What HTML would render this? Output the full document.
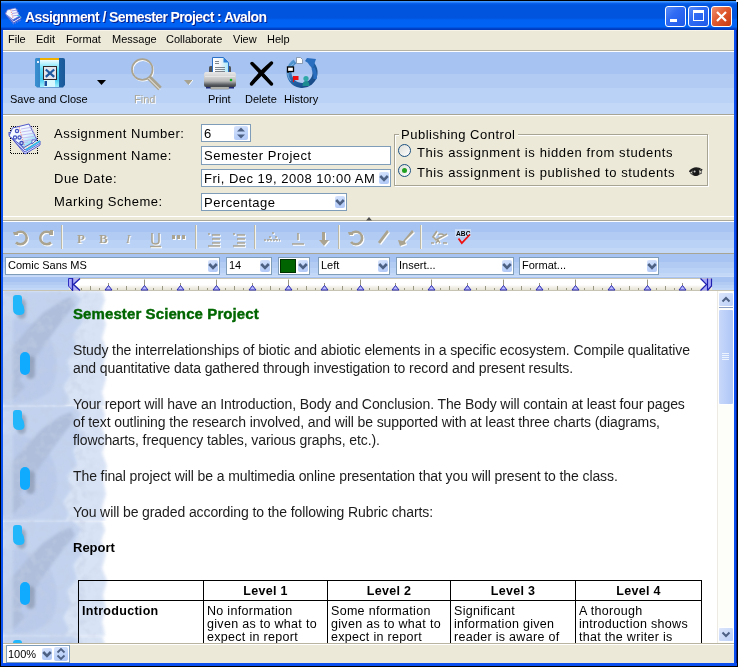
<!DOCTYPE html>
<html><head><meta charset="utf-8">
<style>
*{box-sizing:border-box}
html,body{margin:0;padding:0}
body{width:738px;height:667px;overflow:hidden;position:relative;background:#fff;font-family:"Liberation Sans",sans-serif;color:#000;will-change:transform}
.a{position:absolute}
#title{left:0;top:0;width:738px;height:30px;background:linear-gradient(to bottom,#000 0,#000 1px,#3D95FF 1px,#3D95FF 2px,#0A64EE 3px,#0055DF 5px,#0054DD 18px,#0062F4 20px,#0063F6 27px,#0048D0 28px,#0036B8 30px)}
#ttxt{left:25px;top:9px;font:bold 14px "Liberation Sans",sans-serif;color:#fff;letter-spacing:-0.6px;text-shadow:1px 1px 0 #0A1E8C;white-space:nowrap}
.tb{top:6px;width:21px;height:21px;border:1px solid #fff;border-radius:3px;background:linear-gradient(135deg,#5A8CF8 0%,#2F6BF4 40%,#1F5AE8 100%)}
#lb{left:0;top:30px;width:3px;height:637px;background:linear-gradient(to right,#000 0,#000 1px,#0A52F2 1px)}
#rb{left:734px;top:30px;width:4px;height:637px;background:linear-gradient(to right,#0A4EF0 0,#0A4EF0 2.5px,#001C90 2.5px,#001C90 3.2px,#000 3.2px)}
#bb{left:1px;top:663px;width:736px;height:4px;background:linear-gradient(#0A4EF0 0,#0A4EF0 3px,#000 3px)}
#menu{left:3px;top:30px;width:731px;height:20px;background:#ECE9D8;border-top:1px solid #F8F4E8}
.mi{top:33px;font-size:11px;white-space:nowrap}
#mline{left:3px;top:50px;width:731px;height:2px;background:linear-gradient(#B6B3A4 0,#B6B3A4 1px,#fff 1px)}
#tool{left:3px;top:52px;width:731px;height:62px;background:linear-gradient(#A7C3F1 0,#A7C3F1 22px,#B1CBF3 22px,#B1CBF3 36px,#BAD2F5 36px,#BAD2F5 51px,#C3D8F6 51px)}
.tl{top:93px;font-size:11px;white-space:nowrap}
#tline{left:3px;top:114px;width:731px;height:2px;background:linear-gradient(#A8A594 0,#A8A594 1px,#fff 1px)}
#form{left:3px;top:116px;width:731px;height:100px;background:#ECE9D8}
.lab{font-size:13px;letter-spacing:0.5px;white-space:nowrap}
.inp{background:#fff;border:1px solid #7F9DB9}
.dd{position:absolute;width:14px;border-radius:2px;background:linear-gradient(160deg,#D8E4FC 0%,#C2D6FA 45%,#AEC6F6 100%)}
#split{left:3px;top:216px;width:731px;height:6px;background:linear-gradient(#fff 0,#fff 1px,#ECE9D8 1px,#ECE9D8 4px,#ACA899 4px,#ACA899 5px,#fff 5px)}
#ft1{left:3px;top:222px;width:731px;height:31px;background:linear-gradient(#A7C3F1 0,#A7C3F1 10px,#B1CBF3 10px,#B1CBF3 18px,#BAD2F5 18px,#BAD2F5 26px,#C3D8F6 26px)}
#ft1line{left:3px;top:253px;width:731px;height:1px;background:#A8A594}
#ft2{left:3px;top:254px;width:731px;height:37px;background:linear-gradient(#A7C3F1 0,#A7C3F1 8px,#B1CBF3 8px,#B1CBF3 14px,#BAD2F5 14px,#BAD2F5 19px,#C3D8F6 19px,#C3D8F6 22px,#CADCF8 22px,#CADCF8 23px,#A7C3F1 23px,#A7C3F1 28px,#B1CBF3 28px,#B1CBF3 31px,#BAD2F5 31px,#BAD2F5 34px,#C3D8F6 34px)}
.sep{width:2px;background:linear-gradient(to right,#BCB8A8 0,#BCB8A8 1px,#F4F3EC 1px)}
.cb{position:absolute;top:257px;height:18px;background:#fff;border:1px solid #7F9DB9;font-size:11px;white-space:nowrap}
#ruler{left:69px;top:278px;width:643px;height:12px;background:linear-gradient(#C8C4B4 0,#C8C4B4 1px,#fff 1px,#fff 7px,#F2F0E8 9px,#E6E3D6 12px)}
#content{left:3px;top:291px;width:713px;height:352px;background:#fff;overflow:hidden}
#sb{left:716px;top:291px;width:18px;height:352px;background:linear-gradient(to right,#fff 0,#fff 1px,#ECEAE2 1px,#ECEAE2 2.5px,#FDFDFA 2.5px)}
#status{left:3px;top:643px;width:731px;height:20px;background:linear-gradient(#B8B4A0 0,#B8B4A0 1px,#fff 1px,#fff 2px,#ECE9D8 2px)}
.body{font-size:14px;letter-spacing:-0.1px;white-space:nowrap;line-height:18px;color:#1c1c1c}
table{border-collapse:collapse;font-size:12.5px;letter-spacing:0.3px}
td{border:1px solid #000;vertical-align:top;padding:0 3px;line-height:13px}
</style></head><body>
<!-- title bar -->
<div id="title" class="a"></div>
<svg class="a" style="left:4px;top:6px" width="20" height="20" viewBox="0 0 40 40">
 <path d="M3 15 L19 34 L34 25 L34 21 L19 30 L3 12 Z" fill="#E8ECFF" stroke="#5058C8" stroke-width="2"/>
 <path d="M5 19 L19 36 L34 28" fill="none" stroke="#8088E0" stroke-width="2" stroke-dasharray="3 2"/>
 <path d="M6.5 8 L23 4 L31 20 L18 27.5 L3 16 Z" fill="#F4F8FF" stroke="#7078D8" stroke-width="1.5"/>
 <path d="M15 10 L27 8 M16 15 L29 13 M17 20 L30 18" stroke="#A8A0E8" stroke-width="2"/>
 <path d="M13 7 L18.5 26" stroke="#F07070" stroke-width="2" stroke-dasharray="2 3"/>
 <path d="M26 19 L31 19 L34 24" stroke="#40C8E8" stroke-width="2" fill="none"/>
</svg>
<div class="a" style="left:0;top:0;width:1px;height:30px;background:#000"></div><div class="a" style="left:737px;top:2px;width:1px;height:28px;background:#000"></div><div class="a" style="left:736px;top:0;width:2px;height:2px;background:#E8ECF8"></div><div class="a" style="left:0;top:0;width:1px;height:1px;background:#000"></div><div id="ttxt" class="a">Assignment / Semester Project : Avalon</div>
<div class="a tb" style="left:665px"><div class="a" style="left:4px;top:12px;width:7px;height:3px;background:#fff"></div></div>
<div class="a tb" style="left:688px"><div class="a" style="left:4px;top:3px;width:11px;height:11px;border:1px solid #fff;border-top-width:3px"></div></div>
<div class="a tb" style="left:711px;background:linear-gradient(135deg,#F09070 0%,#E05A30 45%,#C83A10 100%)">
 <svg class="a" style="left:3px;top:3px" width="13" height="13" viewBox="0 0 13 13"><path d="M2 2 L11 11 M11 2 L2 11" stroke="#fff" stroke-width="2.2"/></svg>
</div>
<div id="lb" class="a"></div><div id="rb" class="a"></div><div id="bb" class="a"></div>

<!-- menu -->
<div id="menu" class="a"></div>
<div class="a mi" style="left:8px">File</div>
<div class="a mi" style="left:36px">Edit</div>
<div class="a mi" style="left:66px">Format</div>
<div class="a mi" style="left:112px">Message</div>
<div class="a mi" style="left:166px">Collaborate</div>
<div class="a mi" style="left:233px">View</div>
<div class="a mi" style="left:267px">Help</div>
<div id="mline" class="a"></div>

<!-- toolbar -->
<div id="tool" class="a"></div>
<!-- save icon -->
<svg class="a" style="left:34px;top:57px" width="32" height="32" viewBox="0 0 32 32">
 <defs>
  <linearGradient id="fb" x1="0" y1="0" x2="1" y2="0"><stop offset="0" stop-color="#3A90D0"/><stop offset="0.5" stop-color="#2070B8"/><stop offset="1" stop-color="#1A5898"/></linearGradient>
  <linearGradient id="fl" x1="0" y1="0" x2="0" y2="1"><stop offset="0" stop-color="#F0FCFF"/><stop offset="0.35" stop-color="#60E0F8"/><stop offset="0.7" stop-color="#40C8F0"/><stop offset="1" stop-color="#A0F0FF"/></linearGradient>
 </defs>
 <path d="M2 1 L29 1 Q31 1 31 3 L31 28 L29 30.5 L3 30.5 L1 28.5 L1 2 Z" fill="url(#fb)"/>
 <rect x="6" y="1" width="19" height="2" fill="#F0B000"/>
 <rect x="6" y="3" width="19" height="27" fill="url(#fl)"/>
 <rect x="3" y="4" width="2" height="2" fill="#E8F0FF"/>
 <rect x="9.5" y="9.5" width="13" height="13" fill="#E4E6EE" stroke="#302828" stroke-width="1"/>
 <path d="M11.8 12.5 L20.2 19.8 M20.2 12.5 L11.8 19.8" stroke="#1E5AA0" stroke-width="2.3"/>
 <rect x="10" y="23" width="11" height="7" fill="#D8F8FF"/>
 <rect x="10.5" y="24" width="2.5" height="5" fill="#1A50A0"/>
</svg>
<svg class="a" style="left:97px;top:80px" width="9" height="5"><path d="M0 0 L9 0 L4.5 5 Z" fill="#000"/></svg>
<div class="a tl" style="left:10px">Save and Close</div>
<!-- find -->
<svg class="a" style="left:131px;top:58px" width="33" height="33" viewBox="0 0 33 33">
 <circle cx="12" cy="12.5" r="10.3" fill="none" stroke="#fff" stroke-width="1.6"/>
 <circle cx="11.3" cy="11.5" r="10.3" fill="none" stroke="#A9A390" stroke-width="1.7"/>
 <path d="M17.5 19 L29 30.5" stroke="#A9A390" stroke-width="5"/>
 <path d="M17.5 20 L29 31.5" stroke="#fff" stroke-width="0.9"/>
 <path d="M19 19.5 L30 30.5" stroke="#A9A390" stroke-width="0"/>
</svg>
<svg class="a" style="left:184px;top:80px" width="9" height="5"><path d="M0 0 L9 0 L4.5 5 Z" fill="#A8A290"/><path d="M5 5 L9 0" stroke="#fff" stroke-width="1"/></svg>
<div class="a tl" style="left:134px;color:#ACA899;text-shadow:1px 1px 0 #fff">Find</div>
<!-- print -->
<svg class="a" style="left:200px;top:54px" width="40" height="38" viewBox="0 0 40 38">
 <defs>
  <linearGradient id="pb" x1="0" y1="0" x2="0" y2="1"><stop offset="0" stop-color="#E8E8E8"/><stop offset="0.35" stop-color="#D0D0D0"/><stop offset="0.6" stop-color="#B8B8B8"/><stop offset="0.85" stop-color="#585C60"/><stop offset="1" stop-color="#3A3E42"/></linearGradient>
  <linearGradient id="pp" x1="0" y1="0" x2="1" y2="0"><stop offset="0" stop-color="#FFFFFF"/><stop offset="0.5" stop-color="#F0F4F8"/><stop offset="1" stop-color="#A8E8F8"/></linearGradient>
 </defs>
 <rect x="9" y="12" width="22" height="9" rx="1.5" fill="#505458"/>
 <path d="M12.5 3.5 L23.5 3.5 L28.5 8.5 L28.5 20.5 L12.5 20.5 Z" fill="url(#pp)" stroke="#2A70C8" stroke-width="1"/>
 <path d="M23.5 3.5 L28.5 8.5 L23.5 8.5 Z" fill="#2A80D8"/>
 <path d="M15 7.5 H19 M15 9.5 H19 M15 13.5 H25 M15 15.5 H25 M15 17.5 H25 M15 19.5 H20" stroke="#707880" stroke-width="0.9"/>
 <path d="M6 18 L34 18 Q36 18 36 21 L36 31 Q36 33 34 33 L6 33 Q4 33 4 31 L4 21 Q4 18 6 18 Z" fill="url(#pb)"/>
 <path d="M5 22.5 H35" stroke="#F0F0F0" stroke-width="0.8" opacity="0.8"/>
 <circle cx="31" cy="26" r="1.3" fill="#10B020"/>
 <rect x="6" y="33" width="5" height="1.5" fill="#202878"/>
 <rect x="29" y="33" width="5" height="1.5" fill="#202878"/>
 <rect x="10.5" y="33" width="18.5" height="2" rx="0.8" fill="#C8C8C0" stroke="#606060" stroke-width="0.5"/>
</svg>
<div class="a tl" style="left:208px">Print</div>
<!-- delete -->
<svg class="a" style="left:248px;top:60px" width="27" height="27" viewBox="0 0 27 27">
 <path d="M2.5 3.5 Q3 1.5 5 2.5 Q13 9 24 23 Q25 25.5 22.5 25 Q13 16 2.5 3.5 Z" fill="#000"/>
 <path d="M24.5 3 Q25 1 22.5 2 Q13 9 2.5 22.5 Q1.5 25 4 25 Q14 15 24.5 3 Z" fill="#000"/>
 <path d="M4 3.5 L23.5 24 M23.5 3 L3.5 24" stroke="#000" stroke-width="3.3" stroke-linecap="round"/>
</svg>
<div class="a tl" style="left:245px">Delete</div>
<!-- history -->
<svg class="a" style="left:285px;top:57px" width="34" height="33" viewBox="0 0 34 33">
 <defs><linearGradient id="hg" x1="0" y1="0" x2="1" y2="1"><stop offset="0" stop-color="#5A9ED8"/><stop offset="0.45" stop-color="#2466AA"/><stop offset="1" stop-color="#154580"/></linearGradient></defs>
 <path d="M10 4.5 A13 13 0 1 0 27 7" fill="none" stroke="url(#hg)" stroke-width="5"/>
 <path d="M9 6.5 A11 11 0 0 0 6 24" fill="none" stroke="#B8DCF8" stroke-width="1" opacity="0.5"/>
 <path d="M25 9 Q23 5 20 4 L22 1 L31 2 L28 11 L26 9.5 Z" fill="#2A6EC0"/>
 <path d="M28 11 Q31 17 30 22" fill="none" stroke="#2A6EC0" stroke-width="3.5"/>
 <path d="M11.5 0.5 L15.5 0.5 L17.5 2.5 L17.5 6.5 L11.5 6.5 Z" fill="#fff" stroke="#7A8AA0" stroke-width="0.8"/>
 <rect x="2.5" y="10" width="6" height="4.5" fill="#fff" stroke="#000" stroke-width="1.3"/>
 <path d="M3 14 V16" stroke="#000" stroke-width="1.3"/>
 <rect x="8" y="19" width="5.5" height="4" fill="#F01010"/>
 <path d="M8.5 19 V25" stroke="#E01010" stroke-width="1.2"/>
 <circle cx="21" cy="21.5" r="2.6" fill="#30A8A8"/>
 <path d="M17.5 29 Q17.5 24 21 24 Q24.5 24 24.5 29 Z" fill="#1C8C90"/>
</svg>
<div class="a tl" style="left:284px">History</div>
<div id="tline" class="a"></div>

<!-- form -->
<div id="form" class="a"></div>
<svg class="a" style="left:6px;top:120px" width="40" height="40" viewBox="0 0 40 40">
 <defs><linearGradient id="pg" x1="0" y1="0" x2="1" y2="1"><stop offset="0" stop-color="#FFFFFF"/><stop offset="0.55" stop-color="#E8F4FF"/><stop offset="1" stop-color="#50D0F0"/></linearGradient></defs>
 <rect x="4.5" y="6.5" width="27" height="27" fill="none" stroke="#000" stroke-width="1" stroke-dasharray="1 1" shape-rendering="crispEdges"/>
 <path d="M3 15 L19 34 L34 25 L34 21 L19 30 L3 12 Z" fill="#E8ECFF" stroke="#5058C8" stroke-width="1"/>
 <path d="M4 16.5 L19 32 L33.5 23.5" fill="none" stroke="#5058C8" stroke-width="0.9"/>
 <path d="M20 30 L34 21" stroke="#30B8E8" stroke-width="1.5"/>
 <path d="M6.5 8 L23 4 L31 20 L18 27.5 L3 16 Z" fill="url(#pg)" stroke="#5058C8" stroke-width="1"/>
 <path d="M15 9 L27 7 M15.5 12 L28 10 M16 15 L29 13 M17 18 L30 16 M17.5 21 L30 19 M13 23 L22 22" stroke="#C0B8F0" stroke-width="0.9"/>
 <path d="M13 7 L18.5 26" stroke="#F08080" stroke-width="0.9" stroke-dasharray="1.5 1"/>
 <g fill="none" stroke="#4050C0" stroke-width="1.2"><circle cx="11" cy="11" r="1.6"/><circle cx="9" cy="17.5" r="1.6"/><circle cx="13.5" cy="17.5" r="1.6"/><circle cx="15.5" cy="23" r="1.6"/></g>
 <path d="M26 20 L30 20 L26 24 Z" fill="#fff" stroke="#4050C0" stroke-width="0.8"/>
</svg>
<div class="a lab" style="left:54px;top:126px">Assignment Number:</div>
<div class="a lab" style="left:54px;top:148px">Assignment Name:</div>
<div class="a lab" style="left:54px;top:171px">Due Date:</div>
<div class="a lab" style="left:54px;top:194px">Marking Scheme:</div>
<!-- number spinner -->
<div class="a inp" style="left:201px;top:124px;width:50px;height:18px"></div>
<div class="a lab" style="left:204px;top:126px">6</div>
<div class="dd" style="left:234px;top:126px;height:14px;width:14px"></div><svg class="a" style="left:234px;top:126px" width="14" height="14" viewBox="0 0 14 14"><path d="M3 5.5 L7 1.5 L11 5.5 Z M3 8.5 L7 12.5 L11 8.5 Z" fill="#4D6185"/></svg>
<!-- name -->
<div class="a inp" style="left:201px;top:146px;width:190px;height:19px"></div>
<div class="a lab" style="left:204px;top:148px">Semester Project</div>
<!-- date -->
<div class="a inp" style="left:201px;top:169px;width:190px;height:18px"></div>
<div class="a lab" style="left:204px;top:171px;width:170px;overflow:hidden">Fri, Dec 19, 2008 10:00 AM</div>
<div class="dd" style="left:379px;top:172px;height:12px;width:10px"></div><svg class="a" style="left:379px;top:172px" width="10" height="12" viewBox="0 0 10 12"><path d="M1.2 4 L5 7.8 L8.8 4" stroke="#4D6185" stroke-width="2.6" fill="none" stroke-linejoin="miter"/></svg>
<!-- percentage -->
<div class="a inp" style="left:201px;top:193px;width:146px;height:18px"></div>
<div class="a lab" style="left:204px;top:195px">Percentage</div>
<div class="dd" style="left:335px;top:196px;height:12px;width:10px"></div><svg class="a" style="left:335px;top:196px" width="10" height="12" viewBox="0 0 10 12"><path d="M1.2 4 L5 7.8 L8.8 4" stroke="#4D6185" stroke-width="2.6" fill="none" stroke-linejoin="miter"/></svg>
<!-- publishing control -->
<div class="a" style="left:394px;top:134px;width:314px;height:52px;border:1px solid #A8A494;box-shadow:inset 1px 1px 0 #fff,1px 1px 0 #fff"></div>
<div class="a lab" style="left:399px;top:127px;background:#ECE9D8;padding:0 2px">Publishing Control</div>
<div class="a" style="left:398px;top:144px;width:13px;height:13px;border-radius:50%;border:1px solid #1C5180;background:linear-gradient(135deg,#DCDCD7,#fff)"></div>
<div class="a" style="left:398px;top:164px;width:13px;height:13px;border-radius:50%;border:1px solid #1C5180;background:linear-gradient(135deg,#DCDCD7,#fff)"></div>
<div class="a" style="left:402px;top:168px;width:5px;height:5px;border-radius:50%;background:#21A121"></div>
<div class="a lab" style="left:417px;top:145px;letter-spacing:0.6px">This assignment is hidden from students</div>
<div class="a lab" style="left:417px;top:165px;letter-spacing:0.6px">This assignment is published to students</div>
<svg class="a" style="left:689px;top:166px" width="14" height="12" viewBox="0 0 14 12">
 <path d="M0.5 6 Q6 -0.5 13 4.5" fill="none" stroke="#202020" stroke-width="2.2"/>
 <path d="M1.5 7 Q6 11.5 12.5 7" fill="none" stroke="#505050" stroke-width="1.2"/>
 <circle cx="6.8" cy="6.3" r="3.6" fill="#181818"/>
 <circle cx="5.6" cy="5.4" r="1" fill="#C8C8C8"/>
 <path d="M11 3 Q13.5 5 12 8" fill="none" stroke="#606060" stroke-width="1"/>
</svg>

<div id="split" class="a"></div>
<svg class="a" style="left:366px;top:217px" width="6" height="4"><path d="M0 3.5 L3 0 L6 3.5 Z" fill="#505050"/></svg>

<!-- format toolbar 1 -->
<div id="ft1" class="a"></div>
<div id="ft1line" class="a"></div>
<g></g>
<svg class="a" style="left:3px;top:222px" width="731" height="31" viewBox="3 222 731 31">
 <defs><filter id="emb" x="-10%" y="-10%" width="120%" height="130%"><feOffset dx="1" dy="1" in="SourceAlpha" result="o"/><feFlood flood-color="#fff"/><feComposite in2="o" operator="in" result="w"/><feMerge><feMergeNode in="w"/><feMergeNode in="SourceGraphic"/></feMerge></filter></defs>
 <g filter="url(#emb)">
 <g fill="none" stroke="#A9A390" stroke-width="2.6">
  <path d="M16 233.5 A6.3 6.3 0 1 1 16 242.5"/>
  <path d="M51 233.5 A6.3 6.3 0 1 0 51 242.5"/>
 </g>
 <path d="M13 232 L18 232 L18 235 L14 235 Z M50 230 L53 230 L53 235 L49 235 Z" fill="#A9A390"/>
 <g fill="#A9A390" font-family="Liberation Serif" font-weight="bold">
  <text x="77" y="243" font-size="13">P</text>
  <text x="99" y="243" font-size="13">B</text>
  <text x="126" y="243" font-size="13" font-style="italic" font-weight="normal">I</text>
 </g>
 <path d="M152 233 L152 241 Q152 244 155.5 244 Q159 244 159 241 L159 233 M150 246.5 L161 246.5" stroke="#A9A390" stroke-width="1.6" fill="none"/>
 <path d="M172 235 h3 v4 h-3z M177 235 h3 v4 h-3z M182 235 h3 v4 h-3z" fill="#A9A390"/>
 <path d="M208 234 h2 M212 235 h8 M212 239 h8 M212 243 h8 M208 246 h12 M233 234 h2 M237 235 h8 M237 239 h8 M237 243 h8 M233 246 h12" stroke="#A9A390" stroke-width="1.6"/>
 <path d="M264 240 h16 M270 236 v4 M276 236 v4 M273 232 v3" stroke="#A9A390" stroke-width="1.5" stroke-dasharray="2 1"/>
 <path d="M292 244 h12 M298 233 v7" stroke="#A9A390" stroke-width="1.6"/>
 <path d="M322 232 L325 232 L325 240 L329 240 L324 246 L319 240 L322 240 Z" fill="#A9A390"/>
 <path d="M351 234 A6.3 6.3 0 1 1 351 242" stroke="#A9A390" stroke-width="2.6" fill="none"/>
 <path d="M348 232 L353 232 L353 235 L349 235 Z" fill="#A9A390"/>
 <path d="M387 230 L378 242 L380 244 L389 232 Z" fill="#A9A390"/>
 <path d="M412 230 L403 241 L398 240 L400 246 L406 244 L405 241 L414 232 Z" fill="#A9A390"/>
 <path d="M437 231 L433 237 L436 240 L447 234" stroke="#A9A390" stroke-width="1.8" fill="none"/><path d="M438 235 Q441 233 444 235" stroke="#A9A390" stroke-width="1.5" fill="none"/><path d="M431 243 h3 M436 243 l2 -3 l2 3 M443 243 h4" stroke="#A9A390" stroke-width="1.4" fill="none"/>
 </g>
 <rect x="455" y="229" width="16" height="8" fill="#fff" opacity="0.35"/>
 <text x="456" y="236" font-size="6.6" font-weight="bold" font-family="Liberation Sans" fill="#000" letter-spacing="0.1">ABC</text>
 <path d="M458.5 238.5 L461.8 243 L470 234.5" stroke="#F01010" stroke-width="1.8" fill="none"/>
</svg>
<div class="a sep" style="left:61px;top:225px;height:24px"></div>
<div class="a sep" style="left:195px;top:225px;height:24px"></div>
<div class="a sep" style="left:254px;top:225px;height:24px"></div>
<div class="a sep" style="left:338px;top:225px;height:24px"></div>
<div class="a sep" style="left:420px;top:225px;height:24px"></div>

<!-- format toolbar 2 -->
<div id="ft2" class="a"></div>
<div class="cb" style="left:5px;width:215px"><span class="a" style="left:2px;top:1px">Comic Sans MS</span></div>
<div class="cb" style="left:226px;width:46px"><span class="a" style="left:2px;top:1px">14</span></div>
<div class="cb" style="left:278px;width:32px"><div class="a" style="left:1px;top:1px;width:16px;height:14px;background:#006400;border:1px solid #003000"></div></div>
<div class="cb" style="left:318px;width:72px"><span class="a" style="left:2px;top:1px">Left</span></div>
<div class="cb" style="left:396px;width:118px"><span class="a" style="left:2px;top:1px">Insert...</span></div>
<div class="cb" style="left:519px;width:140px"><span class="a" style="left:2px;top:1px">Format...</span></div>
<div id="dds"><div class="dd" style="left:208px;top:260px;height:12px;width:10px"></div><svg class="a" style="left:208px;top:260px" width="10" height="12" viewBox="0 0 10 12"><path d="M1.2 4 L5 7.8 L8.8 4" stroke="#4D6185" stroke-width="2.6" fill="none" stroke-linejoin="miter"/></svg><div class="dd" style="left:260px;top:260px;height:12px;width:10px"></div><svg class="a" style="left:260px;top:260px" width="10" height="12" viewBox="0 0 10 12"><path d="M1.2 4 L5 7.8 L8.8 4" stroke="#4D6185" stroke-width="2.6" fill="none" stroke-linejoin="miter"/></svg><div class="dd" style="left:298px;top:260px;height:12px;width:10px"></div><svg class="a" style="left:298px;top:260px" width="10" height="12" viewBox="0 0 10 12"><path d="M1.2 4 L5 7.8 L8.8 4" stroke="#4D6185" stroke-width="2.6" fill="none" stroke-linejoin="miter"/></svg><div class="dd" style="left:378px;top:260px;height:12px;width:10px"></div><svg class="a" style="left:378px;top:260px" width="10" height="12" viewBox="0 0 10 12"><path d="M1.2 4 L5 7.8 L8.8 4" stroke="#4D6185" stroke-width="2.6" fill="none" stroke-linejoin="miter"/></svg><div class="dd" style="left:502px;top:260px;height:12px;width:10px"></div><svg class="a" style="left:502px;top:260px" width="10" height="12" viewBox="0 0 10 12"><path d="M1.2 4 L5 7.8 L8.8 4" stroke="#4D6185" stroke-width="2.6" fill="none" stroke-linejoin="miter"/></svg><div class="dd" style="left:647px;top:260px;height:12px;width:10px"></div><svg class="a" style="left:647px;top:260px" width="10" height="12" viewBox="0 0 10 12"><path d="M1.2 4 L5 7.8 L8.8 4" stroke="#4D6185" stroke-width="2.6" fill="none" stroke-linejoin="miter"/></svg></div>
<div id="ruler" class="a"></div><div class="a" style="left:3px;top:290px;width:731px;height:1px;background:#C8C4B4"></div>
<svg id="rsvg" class="a" style="left:60px;top:276px" width="660" height="16" viewBox="60 276 660 16"><path d="M68.5 278.5 L72.5 278.5 L72.5 290.5 L68.5 286 Z" fill="#A8A8F8" stroke="#3030C0" stroke-width="1"/><path d="M73 278.5 L80 278.5 L74 284.5 L80 290.5 L73 290.5 Z" fill="#B0B0F8"/><path d="M72.5 278 L72.5 291 M80 278.5 L73.5 284.5 L80 290.5" stroke="#2020B0" stroke-width="1.4" fill="none"/><path d="M81.5 288 V290" stroke="#9A9684" stroke-width="1"/><path d="M90.5 286 V290" stroke="#9A9684" stroke-width="1"/><path d="M99.5 288 V290" stroke="#9A9684" stroke-width="1"/><path d="M108.5 283 V286" stroke="#9A9684" stroke-width="1"/><path d="M105.0 290 L108.5 285.5 L112.0 290 Z" fill="#B8B8FF" stroke="#2A2AB0" stroke-width="1"/><path d="M117.5 288 V290" stroke="#9A9684" stroke-width="1"/><path d="M126.5 286 V290" stroke="#9A9684" stroke-width="1"/><path d="M135.5 288 V290" stroke="#9A9684" stroke-width="1"/><path d="M144.5 279.5 V286" stroke="#9A9684" stroke-width="1"/><path d="M141.0 290 L144.5 285.5 L148.0 290 Z" fill="#B8B8FF" stroke="#2A2AB0" stroke-width="1"/><path d="M153.5 288 V290" stroke="#9A9684" stroke-width="1"/><path d="M162.5 286 V290" stroke="#9A9684" stroke-width="1"/><path d="M171.5 288 V290" stroke="#9A9684" stroke-width="1"/><path d="M180.5 283 V286" stroke="#9A9684" stroke-width="1"/><path d="M177.0 290 L180.5 285.5 L184.0 290 Z" fill="#B8B8FF" stroke="#2A2AB0" stroke-width="1"/><path d="M189.5 288 V290" stroke="#9A9684" stroke-width="1"/><path d="M198.5 286 V290" stroke="#9A9684" stroke-width="1"/><path d="M207.5 288 V290" stroke="#9A9684" stroke-width="1"/><path d="M216.5 279.5 V286" stroke="#9A9684" stroke-width="1"/><path d="M213.0 290 L216.5 285.5 L220.0 290 Z" fill="#B8B8FF" stroke="#2A2AB0" stroke-width="1"/><path d="M225.5 288 V290" stroke="#9A9684" stroke-width="1"/><path d="M234.5 286 V290" stroke="#9A9684" stroke-width="1"/><path d="M243.5 288 V290" stroke="#9A9684" stroke-width="1"/><path d="M252.5 283 V286" stroke="#9A9684" stroke-width="1"/><path d="M249.0 290 L252.5 285.5 L256.0 290 Z" fill="#B8B8FF" stroke="#2A2AB0" stroke-width="1"/><path d="M261.5 288 V290" stroke="#9A9684" stroke-width="1"/><path d="M270.5 286 V290" stroke="#9A9684" stroke-width="1"/><path d="M279.5 288 V290" stroke="#9A9684" stroke-width="1"/><path d="M288.5 279.5 V286" stroke="#9A9684" stroke-width="1"/><path d="M285.0 290 L288.5 285.5 L292.0 290 Z" fill="#B8B8FF" stroke="#2A2AB0" stroke-width="1"/><path d="M297.5 288 V290" stroke="#9A9684" stroke-width="1"/><path d="M306.5 286 V290" stroke="#9A9684" stroke-width="1"/><path d="M315.5 288 V290" stroke="#9A9684" stroke-width="1"/><path d="M324.5 283 V286" stroke="#9A9684" stroke-width="1"/><path d="M321.0 290 L324.5 285.5 L328.0 290 Z" fill="#B8B8FF" stroke="#2A2AB0" stroke-width="1"/><path d="M333.5 288 V290" stroke="#9A9684" stroke-width="1"/><path d="M342.5 286 V290" stroke="#9A9684" stroke-width="1"/><path d="M351.5 288 V290" stroke="#9A9684" stroke-width="1"/><path d="M360.5 279.5 V286" stroke="#9A9684" stroke-width="1"/><path d="M357.0 290 L360.5 285.5 L364.0 290 Z" fill="#B8B8FF" stroke="#2A2AB0" stroke-width="1"/><path d="M369.5 288 V290" stroke="#9A9684" stroke-width="1"/><path d="M378.5 286 V290" stroke="#9A9684" stroke-width="1"/><path d="M386.5 288 V290" stroke="#9A9684" stroke-width="1"/><path d="M395.5 283 V286" stroke="#9A9684" stroke-width="1"/><path d="M392.0 290 L395.5 285.5 L399.0 290 Z" fill="#B8B8FF" stroke="#2A2AB0" stroke-width="1"/><path d="M404.5 288 V290" stroke="#9A9684" stroke-width="1"/><path d="M413.5 286 V290" stroke="#9A9684" stroke-width="1"/><path d="M422.5 288 V290" stroke="#9A9684" stroke-width="1"/><path d="M431.5 279.5 V286" stroke="#9A9684" stroke-width="1"/><path d="M428.0 290 L431.5 285.5 L435.0 290 Z" fill="#B8B8FF" stroke="#2A2AB0" stroke-width="1"/><path d="M440.5 288 V290" stroke="#9A9684" stroke-width="1"/><path d="M449.5 286 V290" stroke="#9A9684" stroke-width="1"/><path d="M458.5 288 V290" stroke="#9A9684" stroke-width="1"/><path d="M467.5 283 V286" stroke="#9A9684" stroke-width="1"/><path d="M464.0 290 L467.5 285.5 L471.0 290 Z" fill="#B8B8FF" stroke="#2A2AB0" stroke-width="1"/><path d="M476.5 288 V290" stroke="#9A9684" stroke-width="1"/><path d="M485.5 286 V290" stroke="#9A9684" stroke-width="1"/><path d="M494.5 288 V290" stroke="#9A9684" stroke-width="1"/><path d="M503.5 279.5 V286" stroke="#9A9684" stroke-width="1"/><path d="M500.0 290 L503.5 285.5 L507.0 290 Z" fill="#B8B8FF" stroke="#2A2AB0" stroke-width="1"/><path d="M512.5 288 V290" stroke="#9A9684" stroke-width="1"/><path d="M521.5 286 V290" stroke="#9A9684" stroke-width="1"/><path d="M530.5 288 V290" stroke="#9A9684" stroke-width="1"/><path d="M539.5 283 V286" stroke="#9A9684" stroke-width="1"/><path d="M536.0 290 L539.5 285.5 L543.0 290 Z" fill="#B8B8FF" stroke="#2A2AB0" stroke-width="1"/><path d="M548.5 288 V290" stroke="#9A9684" stroke-width="1"/><path d="M557.5 286 V290" stroke="#9A9684" stroke-width="1"/><path d="M566.5 288 V290" stroke="#9A9684" stroke-width="1"/><path d="M575.5 279.5 V286" stroke="#9A9684" stroke-width="1"/><path d="M572.0 290 L575.5 285.5 L579.0 290 Z" fill="#B8B8FF" stroke="#2A2AB0" stroke-width="1"/><path d="M584.5 288 V290" stroke="#9A9684" stroke-width="1"/><path d="M593.5 286 V290" stroke="#9A9684" stroke-width="1"/><path d="M602.5 288 V290" stroke="#9A9684" stroke-width="1"/><path d="M611.5 283 V286" stroke="#9A9684" stroke-width="1"/><path d="M608.0 290 L611.5 285.5 L615.0 290 Z" fill="#B8B8FF" stroke="#2A2AB0" stroke-width="1"/><path d="M620.5 288 V290" stroke="#9A9684" stroke-width="1"/><path d="M629.5 286 V290" stroke="#9A9684" stroke-width="1"/><path d="M638.5 288 V290" stroke="#9A9684" stroke-width="1"/><path d="M647.5 279.5 V286" stroke="#9A9684" stroke-width="1"/><path d="M644.0 290 L647.5 285.5 L651.0 290 Z" fill="#B8B8FF" stroke="#2A2AB0" stroke-width="1"/><path d="M656.5 288 V290" stroke="#9A9684" stroke-width="1"/><path d="M665.5 286 V290" stroke="#9A9684" stroke-width="1"/><path d="M674.5 288 V290" stroke="#9A9684" stroke-width="1"/><path d="M682.5 283 V286" stroke="#9A9684" stroke-width="1"/><path d="M679.0 290 L682.5 285.5 L686.0 290 Z" fill="#B8B8FF" stroke="#2A2AB0" stroke-width="1"/><path d="M691.5 288 V290" stroke="#9A9684" stroke-width="1"/><path d="M700.5 278.5 L711.5 278.5 L711.5 286 L707.5 290.5 L700.5 290.5 L706 284.5 Z" fill="#A8A8F8"/><path d="M700.5 278.5 L706.5 284.5 L700.5 290.5 M707.5 278.5 V290.5 M711.5 278.5 V286 L707.5 290.5" stroke="#2020B0" stroke-width="1.2" fill="none"/></svg>

<!-- content -->
<div id="content" class="a">
 <div id="water" class="a" style="left:0;top:0;width:130px;height:352px"><svg class="a" style="left:0;top:0" width="130" height="352" viewBox="0 0 130 352">
<defs>
<filter id="b1" x="-50%" y="-50%" width="200%" height="200%"><feGaussianBlur stdDeviation="1.5"/></filter>
<filter id="b2" x="-20%" y="-20%" width="140%" height="140%"><feGaussianBlur stdDeviation="4"/></filter>
<filter id="b3" x="-30%" y="-30%" width="160%" height="160%"><feGaussianBlur stdDeviation="5"/></filter>
<filter id="noise" x="0" y="0" width="100%" height="100%"><feTurbulence type="fractalNoise" baseFrequency="0.12" numOctaves="2" seed="7"/><feColorMatrix type="matrix" values="0 0 0 0 0.55  0 0 0 0 0.62  0 0 0 0 0.78  0 0 0 3 -1.3"/></filter>
<linearGradient id="nm" x1="0" y1="0" x2="1" y2="0"><stop offset="0" stop-color="#fff"/><stop offset="0.6" stop-color="#fff"/><stop offset="0.8" stop-color="#000"/></linearGradient>
<mask id="nmask"><rect x="0" y="0" width="130" height="352" fill="url(#nm)"/></mask>
<clipPath id="tc"><rect x="0" y="0" width="130" height="115"/></clipPath>
</defs>
<g clip-path="url(#tc)"><g id="tile">
 <path d="M0 0 H99 L102 9 L98 20 L103 33 L99 47 L104 60 L100 74 L103 88 L99 101 L102 115 H0 Z" fill="#D8E3F5" filter="url(#b1)"/>
 <path d="M0 0 H70 L78 8 L72 20 L80 30 L70 44 L74 58 L64 70 L68 84 L60 96 L66 108 L62 115 H0 Z" fill="#C3D3EF" filter="url(#b1)"/>
 <path d="M0 28 Q30 26 48 50 Q60 75 48 100 Q30 115 0 112 Z" fill="#B9CAEA" filter="url(#b1)"/>
 <path d="M68 6 L58 10 L40 22 L28 34 L18 46 L8 56 L2 66 L0 76 L0 110 L10 108 L22 96 L16 88 L26 78 L36 62 L50 42 L62 26 L72 14 Z" fill="#AEBEDB" filter="url(#b1)"/>
 <path d="M0 4 H10 V112 H0 Z" fill="#D0DDF3" opacity="0.6" filter="url(#b1)"/>
</g></g>
<use href="#tile" y="115" clip-path="url(#tc)"/>
<use href="#tile" y="230"/>
<use href="#tile" y="345"/>
<rect x="0" y="0" width="130" height="352" filter="url(#noise)" mask="url(#nmask)" opacity="0.45"/>
<defs><g id="pills">
 <rect x="14" y="8" width="9" height="20" rx="4.5" fill="#8A98B0" opacity="0.7" filter="url(#b1)"/>
 <rect x="23" y="65" width="9" height="23" rx="4.5" fill="#8A98B0" opacity="0.7" filter="url(#b1)"/>
 <path d="M10 7 Q10 4 13 4 L16 4 Q19 4 19 7 L19 12 Q21.5 15 21.5 19.5 Q21.5 24 16.5 24 Q10 24 10 18 Z" fill="#22B6FA"/>
 <rect x="17" y="61" width="10" height="23" rx="5" fill="#10AAFF"/>
</g></defs>
<use href="#pills"/><use href="#pills" y="115"/><use href="#pills" y="230"/><use href="#pills" y="345"/>
</svg></div>
</div>
<div class="a" style="left:73px;top:305px;font:bold 15px 'Liberation Sans',sans-serif;color:#006600;white-space:nowrap;-webkit-text-stroke:0.4px #006600;letter-spacing:0.1px">Semester Science Project</div>
<div class="a body" style="left:73px;top:341px">Study the interrelationships of biotic and abiotic elements in a specific ecosystem. Compile qualitative<br>and quantitative data gathered through investigation to record and present results.<br><br>Your report will have an Introduction, Body and Conclusion. The Body will contain at least four pages<br>of text outlining the research involved, and will be supported with at least three charts (diagrams,<br>flowcharts, frequency tables, various graphs, etc.).<br><br>The final project will be a multimedia online presentation that you will present to the class.<br><br>You will be graded according to the following Rubric charts:</div>
<div class="a" style="left:73px;top:540px;font:bold 13px 'Liberation Sans',sans-serif;white-space:nowrap">Report</div>
<div class="a" style="left:78px;top:580px;width:624px;height:63px;overflow:hidden">
<table style="width:624px">
<tr style="height:20px"><td style="width:125px"></td><td style="width:124px;text-align:center;font-weight:bold;padding-top:4px">Level 1</td><td style="width:123px;text-align:center;font-weight:bold;padding-top:4px">Level 2</td><td style="width:125px;text-align:center;font-weight:bold;padding-top:4px">Level 3</td><td style="text-align:center;font-weight:bold;padding-top:4px">Level 4</td></tr>
<tr><td style="font-weight:bold;padding-top:4px">Introduction</td><td style="padding-top:4px">No information<br>given as to what to<br>expect in report</td><td style="padding-top:4px">Some nformation<br>given as to what to<br>expect in report</td><td style="padding-top:4px">Significant<br>information given<br>reader is aware of</td><td style="padding-top:4px">A thorough<br>introduction shows<br>that the writer is</td></tr>
</table></div>

<!-- scrollbar -->
<div id="sb" class="a"></div>
<div class="a" style="left:718px;top:292px;width:16px;height:15px;border:1px solid #fff;border-radius:2px;background:linear-gradient(135deg,#DCE6FB,#BBCFF7)"></div>
<svg class="a" style="left:721px;top:296px" width="10" height="7"><path d="M1.5 5.5 L5 2 L8.5 5.5" stroke="#4D6185" stroke-width="2" fill="none"/></svg>
<div class="a" style="left:719px;top:307px;width:14px;height:1px;background:#8CA0C8"></div><div class="a" style="left:718px;top:309px;width:16px;height:96px;border:1px solid #fff;border-radius:2px;background:linear-gradient(to right,#C8D8FA,#B8CDF8 60%,#B0C6F5)"></div>
<div class="a" style="left:722px;top:353px;width:7px;height:7px;background:linear-gradient(#EEF4FE 0,#EEF4FE 1px,transparent 1px,transparent 2px,#EEF4FE 2px,#EEF4FE 3px,transparent 3px,transparent 4px,#EEF4FE 4px,#EEF4FE 5px,transparent 5px,transparent 6px,#EEF4FE 6px,#EEF4FE 7px)"></div>
<div class="a" style="left:718px;top:627px;width:16px;height:15px;border:1px solid #fff;border-radius:2px;background:linear-gradient(135deg,#DCE6FB,#BBCFF7)"></div>
<svg class="a" style="left:721px;top:631px" width="10" height="7"><path d="M1.5 1.5 L5 5 L8.5 1.5" stroke="#4D6185" stroke-width="2" fill="none"/></svg>

<!-- status -->
<div id="status" class="a"></div>
<div class="a" style="left:6px;top:645px;width:64px;height:18px;background:#fff;border:1px solid #7F9DB9"></div>
<div class="a" style="left:8px;top:648px;font-size:11px">100%</div>
<div class="dd" style="left:42px;top:648px;height:12px;width:10px"></div><svg class="a" style="left:42px;top:648px" width="10" height="12" viewBox="0 0 10 12"><path d="M1.2 4 L5 7.8 L8.8 4" stroke="#4D6185" stroke-width="2.6" fill="none" stroke-linejoin="miter"/></svg>
<div class="dd" style="left:54px;top:647px;height:14px;width:14px"></div><svg class="a" style="left:54px;top:647px" width="14" height="14" viewBox="0 0 14 14"><path d="M3.5 5.5 L7 2 L10.5 5.5 M3.5 8.5 L7 12 L10.5 8.5" stroke="#4D6185" stroke-width="1.8" fill="none"/></svg>
</body></html>
